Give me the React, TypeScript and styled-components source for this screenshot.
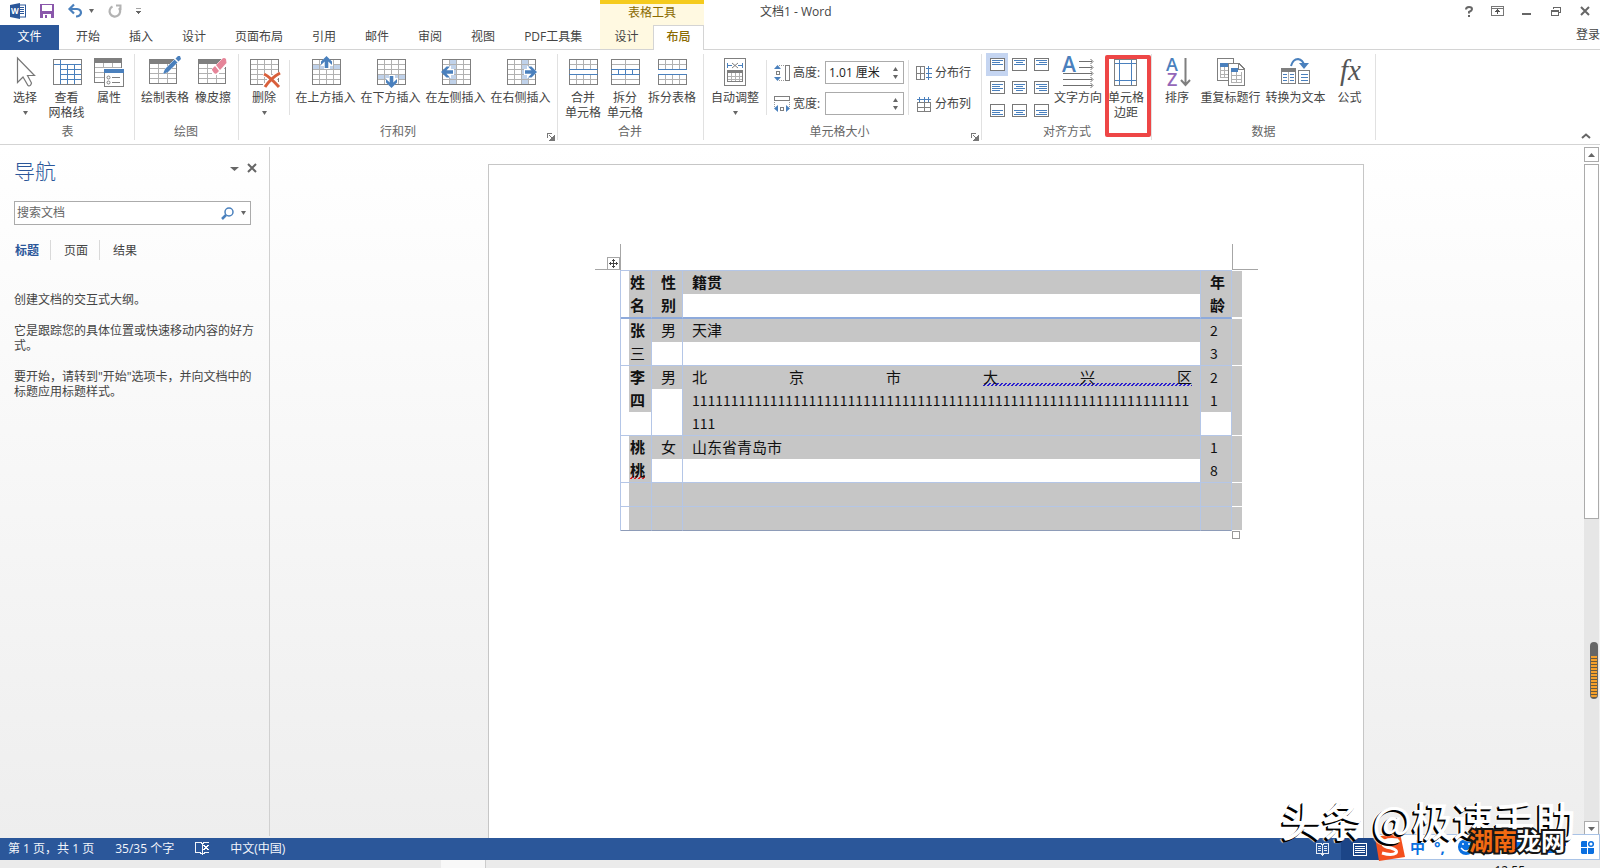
import React from "react";
import styled, { createGlobalStyle, css } from "styled-components";

const blue = "#2b579a";
const iconBlue = "#4a80bd";
const iconGray = "#7f7f7f";
const lineGray = "#b1b1b1";
const tableLine = "#b4c6e7";
const selection = "#c6c6c6";

const GlobalStyle = createGlobalStyle`
  * { box-sizing: border-box; }
  body {
    margin: 0;
    background: #fff;
    color: #444;
    font: 12px/15px "Open Sans", "Noto Sans CJK SC", sans-serif;
  }
  button, input { font: inherit; color: inherit; }
  button { border: 0; padding: 0; margin: 0; background: none; cursor: default; }
  p, h1, h2 { margin: 0; font-weight: 400; }
  svg { display: block; overflow: visible; }
`;

const Shell = styled.div`
  position: relative;
  display: flex;
  flex-direction: column;
  height: 100vh;
  overflow: hidden;
`;

/* ---------- title bar ---------- */

const TitleBar = styled.header`
  display: flex;
  height: 25px;
`;
const QuickAccess = styled.div`
  display: flex;
  align-items: center;
  width: 600px;
  padding: 0 0 3px 10px;
`;
const QuickButton = styled.button<{ $gap: number }>`
  margin-right: ${(p) => p.$gap}px;
`;
const ContextHeading = styled.div`
  width: 104px;
  border-top: 4px solid #f5cb1d;
  background: #fff9e1;
  color: #8a6a00;
  line-height: 17px;
  text-align: center;
`;
const WindowTitle = styled.h1`
  flex: 1;
  padding-left: 56px;
  font-size: 12px;
  line-height: 23px;
`;
const WindowButtons = styled.div`
  display: flex;
  align-items: center;
  padding: 0 1px 3px 0;
`;
const WindowButton = styled.button`
  display: flex;
  justify-content: center;
  width: 29px;
`;

/* ---------- tab strip ---------- */

const TabStrip = styled.nav`
  display: flex;
  height: 25px;
  border-bottom: 1px solid #d4d4d4;
  line-height: 22px;
`;
const FileTab = styled.button`
  width: 59px;
  height: 25px;
  margin-right: 2px;
  padding-bottom: 2px;
  background: ${blue};
  color: #fff;
`;
const Tab = styled.button`
  padding: 0 14px 0 15px;
`;
const ContextTabs = styled.div`
  display: flex;
  width: 104px;
  background: #fff9e1;
`;
const LeftTabs = styled.div`
  display: flex;
  width: 600px;
`;
const ContextTab = styled.button<{ $active?: boolean }>`
  width: 53px;
  ${(p) =>
    p.$active &&
    css`
      width: 51px;
      height: 25px;
      padding-bottom: 3px;
      border: 1px solid #d4d4d4;
      border-bottom: 0;
      background: #fff;
      color: #8a6a00;
      font-weight: 500;
    `}
`;
const SignIn = styled.a`
  flex: 1;
  color: #444;
  line-height: 19px;
  text-align: right;
  text-decoration: none;
`;

/* ---------- ribbon ---------- */

const RibbonBar = styled.div`
  display: flex;
  height: 95px;
  padding-top: 4px;
  border-bottom: 1px solid #d4d4d4;
`;
const Group = styled.section<{ $left: number; $right: number }>`
  position: relative;
  display: flex;
  flex-direction: column;
  height: 86px;
  padding: 0 ${(p) => p.$right}px 0 ${(p) => p.$left}px;
  border-right: 1px solid #e1e1e1;
`;
const GroupBody = styled.div`
  display: flex;
  height: 73px;
`;
const GroupLabel = styled.h2`
  color: #666;
  font-size: 12px;
  line-height: 16px;
  text-align: center;
`;
const Launcher = styled.button`
  position: absolute;
  right: 3px;
  bottom: 0;
`;
const BigButton = styled.button<{ $w: number }>`
  display: flex;
  flex-direction: column;
  align-items: center;
  width: ${(p) => p.$w}px;
  padding-top: 2px;
  line-height: 15px;
  white-space: nowrap;
`;
const BigLabel = styled.span`
  padding-top: 2px;
`;
const CaretBox = styled.span`
  display: block;
  padding-top: 6px;
`;
const Separator = styled.i`
  width: 1px;
  height: 55px;
  margin: 6px 3px 0 4px;
  background: #e1e1e1;
`;
const FieldColumn = styled.div`
  display: flex;
  flex-direction: column;
  gap: 8px;
  padding: 7px 0 0 4px;
`;
const Field = styled.label`
  display: flex;
  align-items: center;
  gap: 3px;
  height: 23px;
`;
const FieldName = styled.span`
  width: 29px;
  white-space: nowrap;
`;
const Spinner = styled.span`
  display: flex;
  width: 79px;
  height: 23px;
  border: 1px solid #ababab;
`;
const SpinnerInput = styled.input`
  width: 62px;
  padding: 0 0 0 3px;
  border: 0;
  outline: 0;
  background: transparent;
  color: #222;
`;
const SpinnerArrows = styled.span`
  display: flex;
  flex-direction: column;
  justify-content: space-between;
  padding: 5px 0 4px 5px;
`;
const InlineButton = styled.button`
  display: flex;
  align-items: center;
  gap: 3px;
  height: 23px;
`;
const AlignGrid = styled.div`
  display: grid;
  grid-template-columns: repeat(3, 22px);
  grid-auto-rows: 23px;
  margin-top: -1px;
`;
const AlignButton = styled.button<{ $on: boolean }>`
  display: flex;
  align-items: center;
  justify-content: center;
  background: ${(p) => (p.$on ? "#c5d5f1" : "none")};
`;
const Highlight = styled.div`
  position: absolute;
  top: 1px;
  right: 0;
  width: 46px;
  height: 82px;
  border: 4px solid #ee4646;
  border-radius: 2px;
`;
const Collapse = styled.button`
  margin: auto 9px 5px auto;
`;

/* ---------- work area ---------- */

const Work = styled.main`
  display: flex;
  flex: 1;
  min-height: 0;
  background: linear-gradient(#fff, #eee);
`;
const NavPane = styled.aside`
  display: flex;
  flex-direction: column;
  width: 270px;
  margin: 2px 0;
  padding: 10px 12px 0 14px;
  border-right: 1px solid #d0d0d0;
`;
const NavHead = styled.div`
  display: flex;
  align-items: flex-start;
  gap: 8px;
  height: 44px;
`;
const NavTitle = styled.h2`
  flex: 1;
  color: ${blue};
  font-size: 21px;
  font-weight: 300;
  line-height: 28px;
`;
const PaneButton = styled.button<{ $top: number }>`
  padding-top: ${(p) => p.$top}px;
`;
const SearchBox = styled.label`
  display: flex;
  align-items: center;
  width: 237px;
  height: 24px;
  border: 1px solid #ababab;
  background: #fff;
`;
const SearchInput = styled.input`
  flex: 1;
  min-width: 0;
  padding: 0 0 1px 2px;
  border: 0;
  outline: 0;
  background: transparent;
  &::placeholder { color: #666; opacity: 1; }
`;
const SearchTools = styled.span`
  display: flex;
  align-items: center;
  gap: 7px;
  padding-right: 4px;
`;
const NavTabs = styled.div`
  display: flex;
  margin: 15px 0 32px;
`;
const NavTab = styled.button<{ $active?: boolean }>`
  height: 20px;
  margin-right: 11px;
  padding: 0 13px 0 1px;
  color: ${(p) => (p.$active ? blue : "#444")};
  font-weight: ${(p) => (p.$active ? 700 : 400)};
  & + & { padding-left: 2px; }
  &:not(:last-child) { border-right: 1px solid #d9d9d9; padding-right: 11px; }
`;
const NavText = styled.p`
  width: 242px;
  margin-bottom: 16px;
`;
const Canvas = styled.div`
  flex: 1;
  display: flex;
  padding: 19px 2px 0 0;
`;
const Paper = styled.article`
  width: 876px;
  margin: 0 auto;
  padding: 105px 0 0 131px;
  border: 1px solid #c6c6c6;
  border-bottom: 0;
  background: #fff;
`;
const TableFrame = styled.div`
  position: relative;
  width: 622px;
`;
const Corner = styled.i<{ $side: "left" | "right" }>`
  position: absolute;
  bottom: 100%;
  ${(p) => (p.$side === "left" ? "right: 100%; border-right" : "left: 612px; border-left")}: 1px solid #a6a6a6;
  width: 26px;
  height: 26px;
  border-bottom: 1px solid #a6a6a6;
  ${(p) => p.$side === "left" && "margin-right: -1px;"}
`;
const MoveHandle = styled.button`
  position: absolute;
  left: -13px;
  top: -13px;
  border: 1px solid #a6a6a6;
  background: #fff;
`;
const ResizeHandle = styled.i`
  position: absolute;
  left: 612px;
  top: 100%;
  width: 8px;
  height: 8px;
  border: 1px solid #999;
  background: #fff;
`;
const DocTable = styled.table`
  width: 622px;
  table-layout: fixed;
  border-collapse: separate;
  border-spacing: 0;
  border-left: 1px solid ${tableLine};
  color: #111;
  font-family: "Noto Sans CJK SC", sans-serif;
  font-size: 15px;
`;
const Cell = styled.td<{ $head?: boolean; $first?: boolean; $last?: boolean }>`
  padding: 0;
  padding-left: ${(p) => (p.$first ? 8 : 0)}px;
  border-right: 1px solid ${tableLine};
  border-bottom: ${(p) => (p.$head ? "2px solid #8eaadb" : `1px solid ${tableLine}`)};
  ${(p) => p.$last && "border-bottom-color: #8e9cb8;"}
  vertical-align: top;
  tr:first-child > & { border-top: 1px solid ${tableLine}; }
`;
const RowEnd = styled.td<{ $head?: boolean }>`
  padding: 0;
  background: ${selection};
  border-bottom: ${(p) => (p.$head ? 2 : 1)}px solid #fff;
  tr:first-child > & { border-top: 1px solid #fff; }
`;
const Line = styled.p<{ $first?: boolean; $bold?: boolean; $digits?: boolean; $spread?: boolean }>`
  height: 23px;
  padding: 0 ${(p) => (p.$first ? 0 : 8)}px 0 ${(p) => (p.$first ? 1 : 9)}px;
  background: ${selection};
  font-weight: ${(p) => (p.$bold ? 700 : 400)};
  font-size: ${(p) => (p.$digits ? 14 : 15)}px;
  line-height: ${(p) => (p.$digits ? 23 : 21)}px;
  white-space: nowrap;
  ${(p) => p.$spread && "white-space: normal; text-align: justify; text-align-last: justify;"}
`;
const Squiggle = styled.span<{ $color: string }>`
  --dash: linear-gradient(90deg, ${(p) => p.$color} 2px, transparent 2px);
  background:
    var(--dash) 0 calc(100% - 1px) / 4px 1px repeat-x,
    var(--dash) 1px calc(100% - 2px) / 4px 1px repeat-x,
    var(--dash) 2px calc(100% - 3px) / 4px 1px repeat-x;
`;

const ScrollBar = styled.div`
  display: flex;
  flex-direction: column;
  width: 16px;
  padding: 2px 1px 2px 0;
`;
const ScrollButton = styled.button`
  display: flex;
  align-items: center;
  justify-content: center;
  height: 15px;
  border: 1px solid #ababab;
  background: #fff;
`;
const ScrollTrack = styled.div`
  flex: 1;
  margin: 2px 0 0;
  background: #e6e6e6;
`;
const ScrollThumb = styled.div`
  height: 54%;
  border: 1px solid #ababab;
  background: #fff;
`;
const Gauge = styled.div`
  position: absolute;
  right: 2px;
  bottom: 169px;
  width: 8px;
  height: 57px;
  border: 1px solid #666;
  border-top-width: 14px;
  border-radius: 4px;
  background: repeating-linear-gradient(#f5a02c 0 2px, #6b5a3c 2px 3px);
`;

/* ---------- bottom ---------- */

const StatusBar = styled.footer`
  display: flex;
  align-items: center;
  height: 22px;
  padding-left: 8px;
  background: ${blue};
  color: #f2f5fa;
`;
const StatusItem = styled.button`
  display: flex;
  align-items: center;
  height: 22px;
  margin-right: 21px;
  padding-bottom: 1px;
  white-space: pre;
`;
const ViewButton = styled.button<{ $on?: boolean }>`
  display: flex;
  align-items: center;
  justify-content: center;
  width: 38px;
  height: 22px;
  background: ${(p) => (p.$on ? "#1c4587" : "none")};
`;
const ViewButtons = styled.div`
  display: flex;
  margin: 0 221px 0 auto;
`;
const TaskStrip = styled.div`
  height: 8px;
  padding-left: 441px;
  overflow: hidden;
  background: #ebebeb;
`;
const TaskItem = styled.div`
  width: 45px;
  height: 8px;
  border-right: 1px solid #ccc;
  background: #f8f8f8;
`;
const Clock = styled.time`
  position: absolute;
  right: 75px;
  bottom: -12px;
  color: #111;
  font-size: 12px;
  line-height: 18px;
`;
const ImeBar = styled.div`
  position: absolute;
  right: 0;
  bottom: 8px;
  display: flex;
  align-items: center;
  width: 221px;
  height: 26px;
  padding: 0 5px 0 0;
  border: 1px solid #a9c3e6;
  background: #fff;
  color: #0a6fe0;
  font-size: 15px;
  font-weight: 700;
`;
const ImeLogo = styled.span`
  margin-left: -5px;
  width: 35px;
`;
const ImeItem = styled.span<{ $w: number }>`
  width: ${(p) => p.$w}px;
`;
const Watermark = styled.div`
  position: absolute;
  right: 24px;
  bottom: 23px;
  color: #fff;
  font: 500 41px/52px "Noto Sans CJK SC", sans-serif;
  text-shadow: -1px 1px 0 #000, -2px 2px 0 #000, -3px 2px 1px #fff;
  white-space: pre;
`;
const SiteMark = styled.div`
  position: absolute;
  right: 35px;
  bottom: 13px;
  color: #fff;
  font: 700 24px/30px "Noto Sans CJK SC", sans-serif;
  -webkit-text-stroke: 4px #161616;
  paint-order: stroke fill;
`;
const SiteAccent = styled.span`
  color: #f26a11;
`;

/* ---------- icons ---------- */

const Svg = ({ w = 32, h = w, soft, children }: { w?: number; h?: number; soft?: boolean; children: React.ReactNode }) => (
  <svg width={w} height={h} viewBox={`0 0 ${w} ${h}`} fill="none" shapeRendering={soft ? "auto" : "crispEdges"} aria-hidden="true">
    {children}
  </svg>
);

const Caret = ({ up, w = 5 }: { up?: boolean; w?: number }) => (
  <Svg w={w} h={4}>
    <path d={up ? `M0 4H${w}L${w / 2} 0Z` : `M0 0H${w}L${w / 2} 4Z`} fill="#666" shapeRendering="auto" />
  </Svg>
);

const Grid = () => (
  <>
    <path d="M9.5 4V28M16.5 4V28M23.5 4V28M3 8.5H30M3 13.5H30M3 18.5H30M3 23.5H30" stroke={lineGray} />
    <rect x="2.5" y="3.5" width="28" height="25" stroke={iconGray} />
  </>
);

const CursorIcon = () => (
  <Svg soft>
    <path d="M8.5 2V26.500L14 21L19 29.500Q21.500 31 22.500 27L18.500 19.500H25.500Z" stroke="#777" strokeWidth="1.2" fill="#fff" />
  </Svg>
);
const GridlinesIcon = () => (
  <Svg>
    <path d="M9.500 9V28M16.500 9V28M23.500 9V28M3 8.500H30M9 13.500H30M9 18.500H30M9 23.500H30" stroke={iconBlue} />
    <path d="M9.500 4V8" stroke={iconBlue} />
    <rect x="2.5" y="3.5" width="28" height="25" stroke={iconGray} />
  </Svg>
);
const PropertiesIcon = () => (
  <Svg>
    <path d="M1.500 2V26.500H11M1.500 2H28V12" stroke={iconGray} />
    <path d="M1 2H29V7H1Z" fill={iconGray} />
    <path d="M2 11.500H28M2 16.500H11M2 21.500H11M10.500 7V11M19.500 7V11" stroke={lineGray} />
    <rect x="11.500" y="13.500" width="19" height="17" fill="#fff" stroke={iconGray} />
    <path d="M11 13H31V17H11Z" fill={iconBlue} />
    <path d="M19 21.500H27M19 26.500H27" stroke={iconGray} />
    <circle cx="15.500" cy="21.500" r="1.500" stroke={iconGray} shapeRendering="auto" />
    <circle cx="15.500" cy="26.500" r="1.500" stroke={iconGray} shapeRendering="auto" />
  </Svg>
);
const HeadedGrid = () => (
  <>
    <path d="M9.500 8V27M18.500 8V27M1 12.500H27M1 17.500H27M1 22.500H27" stroke={lineGray} />
    <rect x=".5" y="3.500" width="27" height="24" stroke={iconGray} />
    <path d="M0 3H28V8H0Z" fill={iconGray} />
  </>
);
const DrawTableIcon = () => (
  <Svg>
    <HeadedGrid />
    <path d="M14 18L16 12L26 2L30 5L20 15Z" fill="#fff" />
    <path d="M14 18L16 13L25.500 3.500L28.500 6.500L19 16Z M26.500 2.500L29 0H31L32 3L29.500 5.500Z" fill={iconBlue} shapeRendering="auto" />
  </Svg>
);
const EraserIcon = () => (
  <Svg>
    <g transform="translate(1 0)">
      <HeadedGrid />
      <path d="M14 13L24 2H30V8L19 19H14Z" fill="#fff" />
      <path d="M18 9L24 3Q26 1 28 3L28.500 7L22 14Z" fill="#e68599" shapeRendering="auto" />
      <path d="M17 10L21 15L18.500 17.500Q17 18 16 17L14 14Q13.500 13 15 12Z" fill="#e68599" shapeRendering="auto" />
    </g>
  </Svg>
);
const DeleteIcon = () => (
  <Svg>
    <Grid />
    <path d="M17 17L31 31M31 17L17 31" stroke="#fff" strokeWidth="6" />
    <path d="M16 18Q22 21 31 31M32 17Q23 22 17 31" stroke="#d9603c" strokeWidth="3" shapeRendering="auto" />
  </Svg>
);
const InsertIcon = ({ dir }: { dir: "up" | "down" | "left" | "right" }) => {
  const band = { up: "M3 9H30V13H3Z", down: "M3 19H30V23H3Z", left: "M10 4H16V28H10Z", right: "M17 4H23V28H17Z" }[dir];
  const turn = { up: "translate(16.5 6)", down: "translate(16.5 26) rotate(180)", left: "translate(7 16) rotate(-90)", right: "translate(26 16) rotate(90)" }[dir];
  return (
    <Svg>
      <path d={band} fill="#c0d2ea" />
      <Grid />
      <path d="M0 -6L6 0V4H3V7H-3V4H-6V0Z" transform={turn} fill="#fff" />
      <path d="M0 -6L5.500 -.5V3L1.800 -.5V6H-1.800V-.5L-5.500 3V-.5Z" transform={turn} fill={iconBlue} shapeRendering="auto" />
    </Svg>
  );
};
const MergeIcon = ({ split }: { split?: boolean }) => (
  <Svg>
    <path
      d={
        split
          ? "M16.500 4V13M16.500 19V28M3 8.500H30M3 23.500H30"
          : "M9.500 4V13M16.500 4V13M23.500 4V13M9.500 19V28M16.500 19V28M23.500 19V28M3 8.500H30M3 23.500H30"
      }
      stroke={lineGray}
    />
    <rect x="2.500" y="3.500" width="28" height="25" stroke={iconGray} />
    <path d="M2 13.500H31M2 18.500H31" stroke={iconBlue} />
    {split && <path d="M9.500 14V18M16.500 14V18M23.500 14V18" stroke={iconBlue} />}
  </Svg>
);
const SplitTableIcon = () => (
  <Svg>
    <path d="M9.500 4V13M16.500 4V13M23.500 4V13M9.500 19V28M16.500 19V28M23.500 19V28M3 8.500H30M3 23.500H30" stroke={lineGray} />
    <path d="M2.500 13V3.500H30.500V13M2.500 19V28.500H30.500V19" stroke={iconGray} />
    <path d="M2 13.500H31M2 18.500H31" stroke={iconBlue} />
  </Svg>
);
const AutoFitIcon = () => (
  <Svg>
    <rect x="5.500" y="2.500" width="21" height="27" stroke={iconGray} />
    <path d="M8.500 7V12M23.500 7V12M9 9.500H13M19 9.500H23" stroke={iconBlue} />
    <path d="M13 7L19 12M19 7L13 12" stroke={iconGray} shapeRendering="auto" />
    <path d="M9 14H24V17H9Z" fill={iconGray} />
    <path d="M12.500 17V25M16.500 17V25M20.500 17V25M9 20.500H24M9 23.500H24" stroke={lineGray} />
    <rect x="8.500" y="14.500" width="15" height="11" stroke={iconGray} />
  </Svg>
);
const SizeIcon = ({ wide }: { wide?: boolean }) => (
  <Svg w={16}>
    {wide ? (
      <>
        <rect x=".5" y=".5" width="15" height="4" stroke={iconGray} />
        <path d="M.5 6V11M15.500 6V11" stroke="#999" strokeDasharray="1 1" />
        <path d="M0 12.500L4 9V16ZM16 12.500L12 9V16Z" fill={iconBlue} shapeRendering="auto" />
        <rect x="6.500" y="11.500" width="3" height="3" stroke={iconGray} />
      </>
    ) : (
      <>
        <rect x="11.500" y=".5" width="4" height="15" stroke={iconGray} />
        <path d="M5 .5H11M5 15.500H11" stroke="#999" strokeDasharray="1 1" />
        <path d="M3.500 0L0 4H7ZM3.500 16L0 12H7Z" fill={iconBlue} shapeRendering="auto" />
        <rect x="2.500" y="6.500" width="3" height="3" stroke={iconGray} />
      </>
    )}
  </Svg>
);
const DistributeIcon = ({ cols }: { cols?: boolean }) => (
  <Svg w={16}>
    {cols ? (
      <>
        <path d="M1.500 6.500H14.500V15.500H1.500ZM8.500 7V15M2 11.500H14" stroke={iconGray} />
        <path d="M1 3.500H15M3.500 1V6M8.500 1V6M12.500 1V6" stroke={iconBlue} />
      </>
    ) : (
      <>
        <path d="M.5 1.500H8.500V14.500H.5ZM4.500 2V14M1 8.500H8" stroke={iconGray} />
        <path d="M12.500 1V15M10 3.500H16M10 8.500H16M10 12.500H16" stroke={iconBlue} />
      </>
    )}
  </Svg>
);
const AlignIcon = ({ row, col }: { row: number; col: number }) => {
  const y = [2.5, 3.5, 6.5][row];
  const short = [[2, 10], [4, 11], [5, 13]][col];
  return (
    <Svg w={15} h={14}>
      <rect x=".5" y=".5" width="14" height="12" stroke="#777" fill="#fff" />
      <path d={`M2 ${y}H13M${short[0]} ${y + 2}H${short[1]}M2 ${y + 4}H13${row === 1 ? `M${short[0]} ${y + 6}H${short[1]}` : ""}`} stroke={iconBlue} />
    </Svg>
  );
};
const DirectionIcon = () => (
  <Svg soft>
    <text x="0" y="16" fill={iconBlue} fontFamily="Open Sans" fontWeight="600" fontSize="21">A</text>
    <path d="M17 5.500H30M17 11.500H30M1 17.500H30M1 23.500H30M1 29.500H30" stroke="#6f6f6f" shapeRendering="crispEdges" />
    <path d="M28.500 3L31 5.500L28.500 8M28.500 9L31 11.500L28.500 14M28.500 15L31 17.500L28.500 20M28.500 21L31 23.500L28.500 26M28.500 27L31 29.500L28.500 32" stroke="#6f6f6f" />
  </Svg>
);
const MarginsIcon = () => (
  <Svg>
    <rect x="4.500" y="3.500" width="22" height="26" stroke={iconGray} />
    <path d="M9.500 4V29M21.500 4V29M5 7.500H26M5 24.500H26" stroke={iconBlue} />
  </Svg>
);
const SortIcon = () => (
  <Svg soft>
    <text x="5" y="15" fill={iconBlue} fontFamily="Open Sans" fontWeight="600" fontSize="18">A</text>
    <text x="6" y="30" fill="#9467b8" fontFamily="Open Sans" fontWeight="600" fontSize="18">Z</text>
    <path d="M24.500 2V29M20 24L24.500 29L29 24" stroke={iconGray} strokeWidth="2" />
  </Svg>
);
const RepeatHeaderIcon = () => (
  <Svg>
    <rect x="2.500" y="2.500" width="16" height="22" stroke={iconGray} fill="#fff" />
    <path d="M5 7H13V11H5Z" fill={iconBlue} />
    <path d="M5.500 11V21.500H13M9.500 11V21M5 14.500H13M5 18.500H13" stroke={lineGray} />
    <path d="M13.500 7.500H24L29.500 13V29.500H13.500Z" stroke={iconGray} fill="#fff" />
    <path d="M23.500 8V13.500H29" stroke={iconGray} />
    <path d="M16 12H23V16H16Z" fill={iconBlue} />
    <path d="M16.500 16V26.500H26.500V16M21.500 16V26M16 19.500H27M16 23.500H27" stroke={lineGray} />
  </Svg>
);
const ConvertIcon = () => (
  <Svg>
    <path d="M11 10Q13 3 18 3Q23 4 24 9" stroke={iconBlue} strokeWidth="2" shapeRendering="auto" />
    <path d="M19 7H29L24 13Z" fill={iconBlue} shapeRendering="auto" />
    <rect x="1.500" y="12.500" width="14" height="15" stroke={iconGray} fill="#fff" />
    <path d="M1 12H16V16H1Z" fill={iconGray} />
    <path d="M3 18.500H7M10 18.500H14M3 21.500H7M10 21.500H14M3 24.500H7M10 24.500H14" stroke={iconBlue} />
    <path d="M8.500 16V27" stroke={lineGray} />
    <rect x="18.500" y="14.500" width="11" height="13" stroke={iconGray} fill="#fff" />
    <path d="M21 18.500H28M21 21.500H28M21 24.500H28" stroke={iconBlue} />
  </Svg>
);
const FormulaIcon = () => (
  <Svg soft>
    <text x="6" y="24" fill="#555" fontFamily="Liberation Serif" fontStyle="italic" fontSize="29">fx</text>
  </Svg>
);
const LauncherIcon = () => (
  <Svg w={7}>
    <path d="M.5 5V.5H5" stroke="#777" />
    <path d="M7 3V7H3ZM2.500 2.500L5 5" fill="#777" stroke="#777" />
  </Svg>
);

const WordIcon = () => (
  <Svg w={16} soft>
    <rect x="8.500" y="2" width="7" height="12" stroke={blue} fill="#fff" />
    <path d="M10 4.500H14M10 6.500H14M10 8.500H14M10 10.500H14" stroke={blue} />
    <path d="M0 2L10 0V16L0 14Z" fill={blue} />
    <text x="1" y="11" fill="#fff" fontFamily="Open Sans" fontWeight="700" fontSize="8">W</text>
  </Svg>
);
const SaveIcon = () => (
  <Svg w={14}>
    <path d="M0 0H14V14H0Z" fill="#8a57ab" />
    <path d="M2 1H12V7H2ZM3 9H11V14H3Z" fill="#fff" />
    <path d="M5 11H7V14H5ZM3 9H11V10H3Z" fill="#8a57ab" />
  </Svg>
);
const UndoIcon = () => (
  <Svg w={15} h={14} soft>
    <path d="M2 5H9Q13 5.500 13 9Q12 12.500 8 12.500" stroke={iconBlue} strokeWidth="2.200" />
    <path d="M6 .5L1.500 5L6 9.500" stroke={iconBlue} strokeWidth="2.200" />
  </Svg>
);
const RedoIcon = () => (
  <Svg w={14} soft>
    <path d="M4.500 2.500A5.300 5.300 0 1 0 11 4" stroke="#b3b3b3" strokeWidth="2.200" />
    <path d="M8 1.500H12.500V6" stroke="#b3b3b3" strokeWidth="2" />
  </Svg>
);
const CrossIcon = () => (
  <Svg w={10} soft>
    <path d="M1 1L9 9M9 1L1 9" stroke="#666" strokeWidth="2" />
  </Svg>
);

/* ---------- data ---------- */

const tabs = ["开始", "插入", "设计", "页面布局", "引用", "邮件", "审阅", "视图", "PDF工具集"];

type RowData = { cells: string[][]; bold: boolean[] };
const rows: RowData[] = [
  { cells: [["姓", "名"], ["性", "别"], ["籍贯"], ["年", "龄"]], bold: [true, true, true, true] },
  { cells: [["张", "三"], ["男"], ["天津"], ["2", "3"]], bold: [true] },
  { cells: [["李", "四"], ["男"], ["北京市大兴区", "1".repeat(64), "111"], ["2", "1"]], bold: [true] },
  { cells: [["桃", "桃"], ["女"], ["山东省青岛市"], ["1", "8"]], bold: [true] },
  { cells: [[""], [""], [""], [""]], bold: [] },
  { cells: [[""], [""], [""], [""]], bold: [] },
];

const lineContent = (text: string, row: number, col: number, i: number) => {
  if (text === "北京市大兴区") return <>北京市<Squiggle $color="#2a1fd0">大兴区</Squiggle></>;
  if (row === 3 && col === 0 && i === 1) return <Squiggle $color="#e02020">{text}</Squiggle>;
  return text;
};

const Big = ({ w, icon, lines, menu }: { w: number; icon: React.ReactNode; lines: string[]; menu?: boolean }) => (
  <BigButton $w={w}>
    {icon}
    <BigLabel>
      {lines[0]}
      {lines[1] && <><br />{lines[1]}</>}
    </BigLabel>
    {menu && <CaretBox><Caret /></CaretBox>}
  </BigButton>
);

const SizeField = ({ name, value, wide }: { name: string; value: string; wide?: boolean }) => (
  <Field>
    <SizeIcon wide={wide} />
    <FieldName>{name}</FieldName>
    <Spinner>
      <SpinnerInput defaultValue={value} />
      <SpinnerArrows><Caret up /><Caret /></SpinnerArrows>
    </Spinner>
  </Field>
);

export default function App() {
  return (
    <Shell>
      <GlobalStyle />
      <TitleBar>
        <QuickAccess>
          <QuickButton $gap={14} aria-label="Word"><WordIcon /></QuickButton>
          <QuickButton $gap={14} aria-label="保存"><SaveIcon /></QuickButton>
          <QuickButton $gap={6} aria-label="撤消"><UndoIcon /></QuickButton>
          <QuickButton $gap={14} aria-label="撤消列表"><Caret /></QuickButton>
          <QuickButton $gap={14} aria-label="重复"><RedoIcon /></QuickButton>
          <QuickButton $gap={0} aria-label="自定义">
            <Svg w={5} h={7}><path d="M0 .5H5M0 3H5L2.500 6Z" stroke="#666" fill="#666" strokeWidth=".6" /></Svg>
          </QuickButton>
        </QuickAccess>
        <ContextHeading>表格工具</ContextHeading>
        <WindowTitle>文档1 - Word</WindowTitle>
        <WindowButtons>
          <WindowButton aria-label="帮助"><Svg w={8} h={11} soft><path d="M1 3.500Q1 1 4 1Q7 1 7 3.200Q7 4.500 4 6V7.500M4 9V11" stroke="#666" strokeWidth="2" /></Svg></WindowButton>
          <WindowButton aria-label="功能区显示选项"><Svg w={13} h={10}><path d="M.5 .5H12.500V9.500H.5ZM1 2.500H12" stroke="#777" /><path d="M6.500 4V8M4.500 6L6.500 4L8.500 6" stroke="#555" /></Svg></WindowButton>
          <WindowButton aria-label="最小化"><Svg w={9} h={8}><path d="M0 7H9" stroke="#666" strokeWidth="2" /></Svg></WindowButton>
          <WindowButton aria-label="向下还原"><Svg w={10} h={10}><path d="M2.500 3V1H9.500V6H8" stroke="#666" /><path d="M.5 4.500H7.500V9.500H.5ZM1 5H8" stroke="#666" /></Svg></WindowButton>
          <WindowButton aria-label="关闭"><CrossIcon /></WindowButton>
        </WindowButtons>
      </TitleBar>
      <TabStrip>
        <LeftTabs>
          <FileTab>文件</FileTab>
          {tabs.map((t) => <Tab key={t}>{t}</Tab>)}
        </LeftTabs>
        <ContextTabs>
          <ContextTab>设计</ContextTab>
          <ContextTab $active>布局</ContextTab>
        </ContextTabs>
        <SignIn href="#">登录</SignIn>
      </TabStrip>

      <RibbonBar>
        <Group $left={5} $right={4}>
          <GroupBody>
            <Big w={40} icon={<CursorIcon />} lines={["选择"]} menu />
            <Big w={43} icon={<GridlinesIcon />} lines={["查看", "网格线"]} />
            <Big w={42} icon={<PropertiesIcon />} lines={["属性"]} />
          </GroupBody>
          <GroupLabel>表</GroupLabel>
        </Group>
        <Group $left={3} $right={4}>
          <GroupBody>
            <Big w={54} icon={<DrawTableIcon />} lines={["绘制表格"]} />
            <Big w={42} icon={<EraserIcon />} lines={["橡皮擦"]} />
          </GroupBody>
          <GroupLabel>绘图</GroupLabel>
        </Group>
        <Group $left={4} $right={4}>
          <GroupBody>
            <Big w={42} icon={<DeleteIcon />} lines={["删除"]} menu />
            <Separator />
            <Big w={65} icon={<InsertIcon dir="up" />} lines={["在上方插入"]} />
            <Big w={65} icon={<InsertIcon dir="down" />} lines={["在下方插入"]} />
            <Big w={65} icon={<InsertIcon dir="left" />} lines={["在左侧插入"]} />
            <Big w={65} icon={<InsertIcon dir="right" />} lines={["在右侧插入"]} />
          </GroupBody>
          <GroupLabel>行和列</GroupLabel>
          <Launcher aria-label="行和列选项"><LauncherIcon /></Launcher>
        </Group>
        <Group $left={4} $right={5}>
          <GroupBody>
            <Big w={42} icon={<MergeIcon />} lines={["合并", "单元格"]} />
            <Big w={42} icon={<MergeIcon split />} lines={["拆分", "单元格"]} />
            <Big w={52} icon={<SplitTableIcon />} lines={["拆分表格"]} />
          </GroupBody>
          <GroupLabel>合并</GroupLabel>
        </Group>
        <Group $left={4} $right={10}>
          <GroupBody>
            <Big w={54} icon={<AutoFitIcon />} lines={["自动调整"]} menu />
            <Separator />
            <FieldColumn>
              <SizeField name="高度:" value="1.01 厘米" />
              <SizeField name="宽度:" value="" wide />
            </FieldColumn>
            <Separator />
            <FieldColumn>
              <InlineButton><DistributeIcon />分布行</InlineButton>
              <InlineButton><DistributeIcon cols />分布列</InlineButton>
            </FieldColumn>
          </GroupBody>
          <GroupLabel>单元格大小</GroupLabel>
          <Launcher aria-label="单元格大小选项"><LauncherIcon /></Launcher>
        </Group>
        <Group $left={4} $right={3}>
          <GroupBody>
            <AlignGrid>
              {[0, 1, 2].map((r) =>
                [0, 1, 2].map((c) => (
                  <AlignButton key={`${r}${c}`} $on={r + c === 0} aria-label={`对齐 ${r + 1}-${c + 1}`}>
                    <AlignIcon row={r} col={c} />
                  </AlignButton>
                ))
              )}
            </AlignGrid>
            <Big w={52} icon={<DirectionIcon />} lines={["文字方向"]} />
            <Big w={44} icon={<MarginsIcon />} lines={["单元格", "边距"]} />
          </GroupBody>
          <GroupLabel>对齐方式</GroupLabel>
          <Highlight />
        </Group>
        <Group $left={4} $right={4}>
          <GroupBody>
            <Big w={42} icon={<SortIcon />} lines={["排序"]} />
            <Big w={65} icon={<RepeatHeaderIcon />} lines={["重复标题行"]} />
            <Big w={65} icon={<ConvertIcon />} lines={["转换为文本"]} />
            <Big w={43} icon={<FormulaIcon />} lines={["公式"]} />
          </GroupBody>
          <GroupLabel>数据</GroupLabel>
        </Group>
        <Collapse aria-label="折叠功能区">
          <Svg w={10} h={6} soft><path d="M1 5L5 1.500L9 5" stroke="#666" strokeWidth="2" /></Svg>
        </Collapse>
      </RibbonBar>

      <Work>
        <NavPane>
          <NavHead>
            <NavTitle>导航</NavTitle>
            <PaneButton $top={10} aria-label="任务窗格选项"><Caret w={9} /></PaneButton>
            <PaneButton $top={6} aria-label="关闭导航"><CrossIcon /></PaneButton>
          </NavHead>
          <SearchBox>
            <SearchInput placeholder="搜索文档" aria-label="搜索文档" />
            <SearchTools>
              <Svg w={13} soft>
                <circle cx="8" cy="5" r="4" stroke={iconBlue} strokeWidth="1.500" />
                <path d="M5 8L1 12" stroke={iconBlue} strokeWidth="2.500" />
              </Svg>
              <Caret />
            </SearchTools>
          </SearchBox>
          <NavTabs>
            <NavTab $active>标题</NavTab>
            <NavTab>页面</NavTab>
            <NavTab>结果</NavTab>
          </NavTabs>
          <NavText>创建文档的交互式大纲。</NavText>
          <NavText>它是跟踪您的具体位置或快速移动内容的好方式。</NavText>
          <NavText>要开始，请转到"开始"选项卡，并向文档中的标题应用标题样式。</NavText>
        </NavPane>
        <Canvas>
          <Paper>
            <TableFrame>
              <Corner $side="left" />
              <Corner $side="right" />
              <DocTable>
                <colgroup>
                  <col width="31" /><col width="31" /><col width="518" /><col width="31" /><col width="10" />
                </colgroup>
                <tbody>
                  {rows.map((row, r) => (
                    <tr key={r}>
                      {row.cells.map((lines, c) => (
                        <Cell key={c} $head={r === 0} $first={c === 0} $last={r === rows.length - 1}>
                          {lines.map((text, i) => (
                            <Line
                              key={i}
                              $first={c === 0}
                              $bold={row.bold[c] && text !== "三"}
                              $digits={/^\d/.test(text)}
                              $spread={text === "北京市大兴区"}
                            >
                              {lineContent(text, r, c, i)}
                            </Line>
                          ))}
                        </Cell>
                      ))}
                      <RowEnd $head={r === 0} />
                    </tr>
                  ))}
                </tbody>
              </DocTable>
              <MoveHandle aria-label="移动表格">
                <Svg w={11}>
                  <path d="M5.500 1V10M1 5.500H10M4 2.500H7M4 8.500H7M2.500 4V7M8.500 4V7" stroke="#444" />
                </Svg>
              </MoveHandle>
              <ResizeHandle />
            </TableFrame>
          </Paper>
        </Canvas>
        <ScrollBar>
          <ScrollButton aria-label="向上滚动"><Caret up w={7} /></ScrollButton>
          <ScrollTrack><ScrollThumb /></ScrollTrack>
          <ScrollButton aria-label="向下滚动"><Caret w={7} /></ScrollButton>
        </ScrollBar>
      </Work>

      <StatusBar>
        <StatusItem>第 1 页，共 1 页</StatusItem>
        <StatusItem>35/35 个字</StatusItem>
        <StatusItem aria-label="校对">
          <Svg w={14} h={13}>
            <path d="M7.500 2L6 .5H.5V10.500H5L7.500 12.500L10 10.500H13.500M7.500 2V12M7.500 2L9 .5H13.500" stroke="#f2f5fa" />
            <path d="M9 3L13 8M13 3L9 8" stroke="#fff" strokeWidth="1.500" />
          </Svg>
        </StatusItem>
        <StatusItem>中文(中国)</StatusItem>
        <ViewButtons>
          <ViewButton aria-label="阅读视图">
            <Svg w={13} h={13}><path d="M6.500 2V13M.5 .5H5L6.500 2L8 .5H12.500V10.500H8L6.500 12L5 10.500H.5ZM2 3.500H5M2 5.500H5M2 7.500H5M8 3.500H11M8 5.500H11M8 7.500H11" stroke="#e6ecf5" /></Svg>
          </ViewButton>
          <ViewButton $on aria-label="页面视图">
            <Svg w={14} h={13}><path d="M.5 .5H13.500V12.500H.5ZM2 3.500H12M2 5.500H12M2 7.500H12M2 9.500H12" stroke="#fff" /></Svg>
          </ViewButton>
        </ViewButtons>
      </StatusBar>
      <TaskStrip><TaskItem /></TaskStrip>
      <Clock>12:55</Clock>

      <Gauge />
      <ImeBar>
        <ImeLogo>
          <Svg w={30} h={28} soft>
            <path d="M0 4L25 0L30 24L4 28Z" fill="#f4501e" />
            <path d="M23 7Q9 5 8 11Q8 14 16 15Q23 17 21 20Q17 23 7 20" stroke="#fff" strokeWidth="3" />
          </Svg>
        </ImeLogo>
        <ImeItem $w={24}>中</ImeItem>
        <ImeItem $w={24}>°,</ImeItem>
        <ImeItem $w={30}>
          <Svg w={16} soft><circle cx="8" cy="8" r="8" fill="#0a6fe0" /><path d="M3 9Q8 15 13 9M4 5H6M10 5H12" stroke="#fff" strokeWidth="1.500" /></Svg>
        </ImeItem>
        <ImeItem $w={93}>
          <Svg w={80} h={14}><path d="M2 1H12V13H2ZM22 2H40V12H22ZM54 1H58L64 4L70 1H78V6H74V13H58V6H54Z" fill="#0a6fe0" /></Svg>
        </ImeItem>
        <Svg w={13} soft>
          <path d="M1 0H6V6H0V1ZM0 7H6V13H1L0 12ZM7 7H13V12L12 13H7Z" fill="#0a6fe0" />
          <circle cx="10" cy="3" r="2.300" stroke="#0a6fe0" strokeWidth="1.500" />
        </Svg>
      </ImeBar>
      <Watermark>头条 @极速手助</Watermark>
      <SiteMark><SiteAccent>湖南</SiteAccent>龙网</SiteMark>
    </Shell>
  );
}
